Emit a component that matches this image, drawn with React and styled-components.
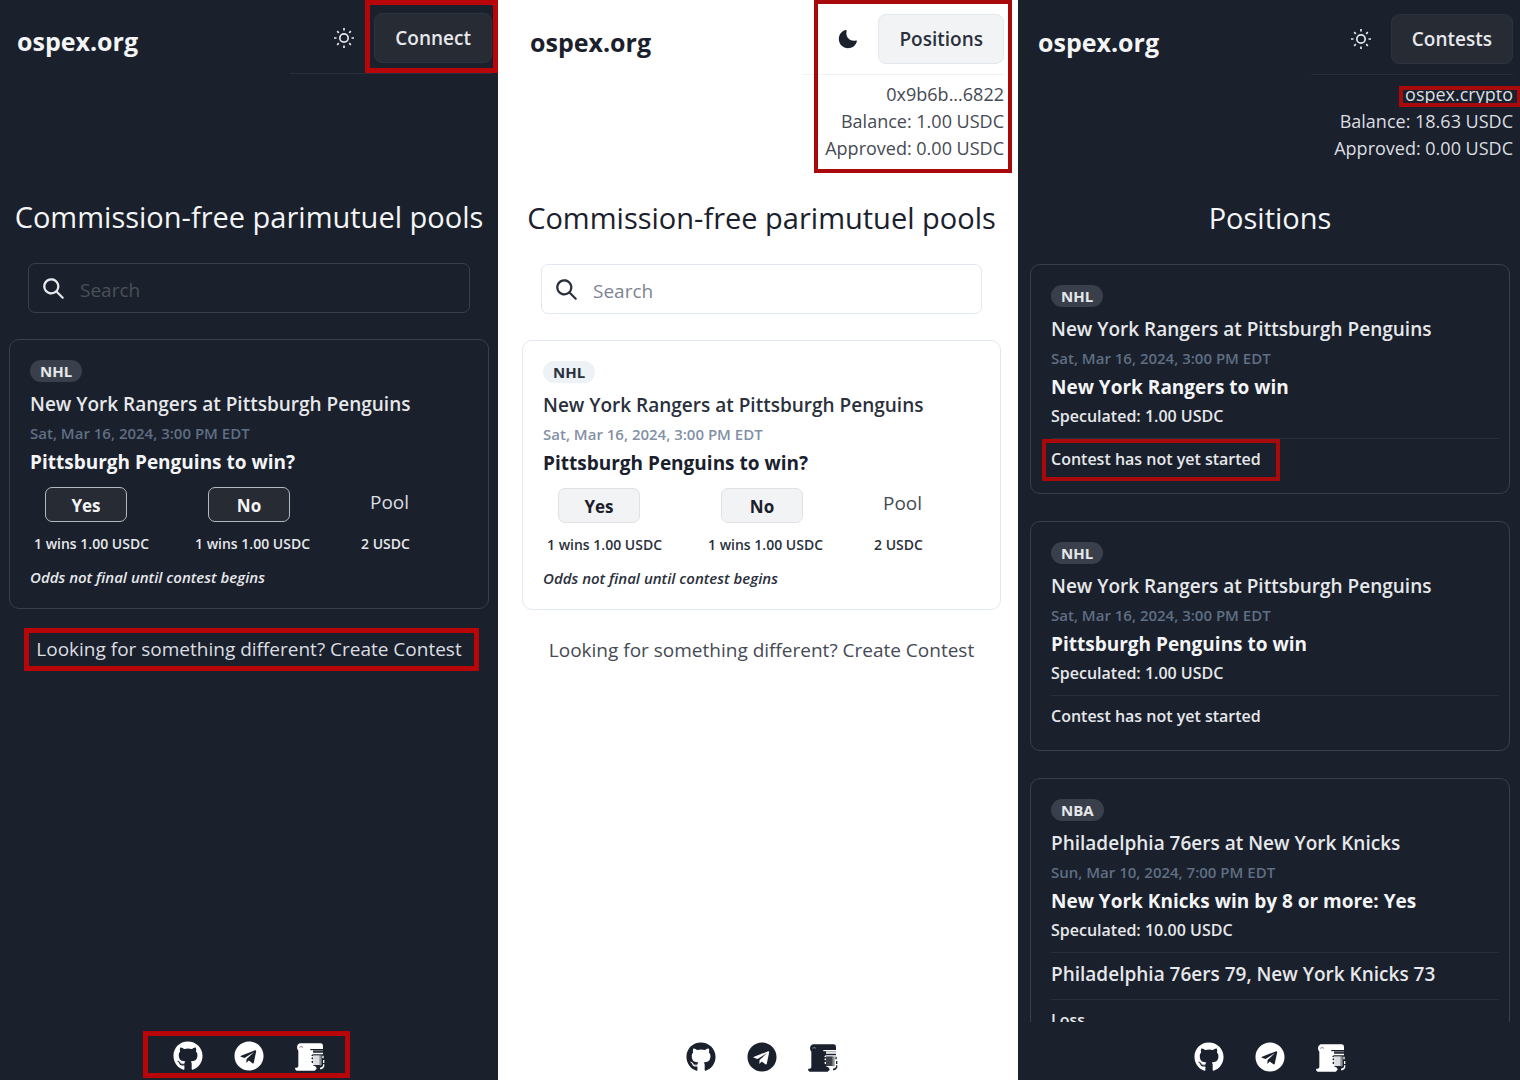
import React from "react";
import styled, { createGlobalStyle, ThemeProvider } from "styled-components";
import { FaGithub, FaTelegram } from "react-icons/fa";

const dark = {
  bg: "#1a202c",
  text: "#e6e8eb",
  strong: "#f4f5f6",
  soft: "#dcdee1",
  muted: "#5f6f84",
  placeholder: "#4b5058",
  line: "#292f3a",
  border: "#3a404b",
  badge: "#3a404b",
  button: "#272b33",
  buttonBorder: "#2b3240",
  betBorder: "#b4b7bc",
  icon: "#ffffff",
};

const light = {
  bg: "#ffffff",
  text: "#2a303c",
  strong: "#1a202c",
  soft: "#454a54",
  muted: "#8390a6",
  placeholder: "#7c8494",
  line: "#eff1f5",
  border: "#e2e8f0",
  badge: "#edf2f7",
  button: "#f2f3f5",
  buttonBorder: "#e2e8f0",
  betBorder: "#dfe1e4",
  icon: "#1a202c",
};

const GlobalStyle = createGlobalStyle`
  *, *::before, *::after { box-sizing: border-box; }
  body { margin: 0; font-family: "Open Sans", "Noto Sans", sans-serif; }
  h1, h2, h3, p, ul { margin: 0; padding: 0; }
  button, input { font-family: inherit; }
`;

const Board = styled.main`
  display: grid;
  grid-template-columns: 498fr 520fr 502fr;
  height: 100vh;
`;

const Panel = styled.section`
  display: flex;
  flex-direction: column;
  min-width: 0;
  height: 100vh;
  overflow: hidden;
  padding: ${(p) => p.$padding};
  background: ${(p) => p.theme.bg};
  color: ${(p) => p.theme.text};
`;

const Header = styled.header`
  display: flex;
  justify-content: space-between;
  align-items: flex-start;
  flex: none;
  height: 185px;
  margin-right: -3px;
  padding-left: 8px;
`;

const Brand = styled.h1`
  padding-top: 11px;
  font-size: 25px;
  line-height: 34px;
  font-weight: 700;
  color: ${(p) => p.theme.strong};
`;

const Account = styled.div`
  position: relative;
  display: flex;
  flex-direction: column;
  min-width: 202px;
`;

const Actions = styled.div`
  display: flex;
  justify-content: flex-end;
  align-items: center;
  gap: 20px;
  padding-bottom: 10px;
  border-bottom: 1px solid ${(p) => p.theme.line};
`;

const IconButton = styled.button`
  display: flex;
  padding: 0;
  border: 0;
  background: none;
  color: ${(p) => p.theme.text};
`;

const ButtonWrap = styled.div`
  position: relative;
`;

const MainButton = styled.button`
  display: block;
  height: 50px;
  padding: 0 20px;
  border: 1px solid ${(p) => p.theme.buttonBorder};
  border-radius: 8px;
  background: ${(p) => p.theme.button};
  color: ${(p) => p.theme.text};
  font-size: 19px;
  font-weight: 600;
`;

const Balances = styled.div`
  display: flex;
  flex-direction: column;
  align-items: flex-end;
  padding-top: 6px;
  font-size: 18px;
  line-height: 27px;
  color: ${(p) => p.theme.soft};
`;

const BalanceLine = styled.p`
  position: relative;
`;

const Mark = styled.span`
  position: absolute;
  inset: ${(p) => p.$inset};
  border: ${(p) => p.$width || 4}px solid ${(p) => (p.$width === 5 ? "#b80508" : "#a80a0c")};
  pointer-events: none;
`;

const Heading = styled.h2`
  flex: none;
  text-align: center;
  font-size: 29px;
  line-height: 38px;
  font-weight: 400;
  white-space: nowrap;
  color: ${(p) => p.theme.strong};
`;

const SearchBox = styled.label`
  display: flex;
  align-items: center;
  flex: none;
  gap: 16px;
  height: 50px;
  margin: 27px 19px 26px;
  padding: 0 14px;
  border: 1px solid ${(p) => p.theme.border};
  border-radius: 7px;
`;

const SearchInput = styled.input`
  flex: 1;
  min-width: 0;
  padding: 3px 0 0;
  border: 0;
  outline: 0;
  background: none;
  color: ${(p) => p.theme.text};
  font-size: 19px;
  &::placeholder { color: ${(p) => p.theme.placeholder}; opacity: 1; }
`;

const Card = styled.article`
  display: flex;
  flex-direction: column;
  align-items: flex-start;
  flex: none;
  padding: 20px 10px 20px 20px;
  border: 1px solid ${(p) => p.theme.border};
  border-radius: 10px;
`;

const Badge = styled.span`
  margin-bottom: 8px;
  padding: 0 10px;
  border-radius: 11px;
  background: ${(p) => p.theme.badge};
  font-size: 15px;
  line-height: 22px;
  font-weight: 700;
`;

const Matchup = styled.h3`
  font-size: 19px;
  line-height: 29px;
  font-weight: 600;
`;

const DateLine = styled.p`
  font-size: 15px;
  line-height: 29px;
  font-weight: 600;
  color: ${(p) => p.theme.muted};
`;

const Proposition = styled.p`
  font-size: 19px;
  line-height: 29px;
  font-weight: 700;
  color: ${(p) => p.theme.strong};
`;

const BetRow = styled.div`
  display: grid;
  grid-template-columns: 163px 162px auto;
  align-items: center;
  margin-top: 10px;
  padding-left: 15px;
`;

const BetButton = styled.button`
  width: 82px;
  height: 35px;
  padding: 2px 0 0;
  border: 1px solid ${(p) => p.theme.betBorder};
  border-radius: 7px;
  background: ${(p) => p.theme.button};
  color: ${(p) => p.theme.strong};
  font-size: 17px;
  font-weight: 700;
`;

const PoolLabel = styled.span`
  padding-bottom: 4px;
  font-size: 19px;
  line-height: 27px;
  color: ${(p) => p.theme.soft};
`;

const OddsRow = styled.div`
  display: grid;
  grid-template-columns: 161px 166px auto;
  margin: 11px 0;
  padding-left: 4px;
  font-size: 14px;
  line-height: 22px;
  font-weight: 600;
`;

const Note = styled.p`
  font-size: 15px;
  line-height: 22px;
  font-weight: 600;
  font-style: italic;
`;

const Stake = styled.p`
  margin-bottom: 7px;
  font-size: 16px;
  line-height: 29px;
  font-weight: 600;
`;

const Result = styled.div`
  align-self: stretch;
  padding-top: 6px;
  border-top: 1px solid ${(p) => p.theme.line};
  font-size: 16px;
  line-height: 28px;
  font-weight: 600;
`;

const Score = styled(Result)`
  padding: 7px 0 10px;
  font-size: 19px;
  line-height: 29px;
`;

const Marked = styled.span`
  position: relative;
  display: inline-block;
`;

const CreateLine = styled.p`
  position: relative;
  align-self: center;
  margin-top: 26px;
  font-size: 19px;
  line-height: 29px;
  white-space: nowrap;
  color: ${(p) => p.theme.soft};
`;

const CreateLink = styled.a`
  color: inherit;
  text-decoration: none;
`;

const PositionList = styled.div`
  display: flex;
  flex-direction: column;
  flex: 1;
  gap: 27px;
  min-height: 0;
  margin-top: 27px;
  overflow: hidden;
`;

const Footer = styled.footer`
  display: flex;
  justify-content: center;
  flex: none;
  margin-top: auto;
  padding: 20px 0 ${(p) => p.$bottom}px;
`;

const Social = styled.nav`
  position: relative;
  display: flex;
  gap: 31px;
`;

const SocialLink = styled.a`
  display: flex;
  color: ${(p) => p.theme.icon};
`;

const SunIcon = () => (
  <svg width="20" height="20" viewBox="0 0 24 24" fill="none" stroke="currentColor" strokeWidth="2" aria-hidden="true">
    <circle cx="12" cy="12" r="5" />
    <path d="M12 0v3M12 21v3M3.8 3.8l2 2M18.2 18.2l2 2M0 12h3M21 12h3M3.8 20.2l2-2M18.2 5.8l2-2" />
  </svg>
);

const MoonIcon = () => (
  <svg width="20" height="20" viewBox="0 0 24 24" fill="#1a202c" aria-hidden="true">
    <path d="M21.4,13.7C20.6,13.9,19.8,14,19,14c-5,0-9-4-9-9c0-0.8,0.1-1.6,0.3-2.4c0.1-0.3,0-0.7-0.3-1c-0.3-0.3-0.6-0.4-1-0.3C4.3,2.7,1,7.1,1,12c0,6.1,4.9,11,11,11c4.9,0,9.3-3.3,10.6-8.1c0.1-0.3,0-0.7-0.3-1C22.1,13.7,21.7,13.6,21.4,13.7z" />
  </svg>
);

const SearchIcon = () => (
  <svg width="21" height="21" viewBox="0 0 24 24" fill="currentColor" aria-hidden="true">
    <path d="M23.384,21.619,16.855,15.09a9.284,9.284,0,1,0-1.768,1.768l6.529,6.529a1.266,1.266,0,0,0,1.768,0A1.251,1.251,0,0,0,23.384,21.619ZM2.75,9.5a6.75,6.75,0,1,1,6.75,6.75A6.758,6.758,0,0,1,2.75,9.5Z" />
  </svg>
);

const ScrollIcon = () => (
  <svg width="30" height="30" viewBox="0 0 90 90" fill="currentColor" aria-hidden="true">
    <path d="M14 7h64q6 1 6 8v9H46v4h8v7h30v5H54l-6 3 8 4-8 5 8 5-8 6 8 5-2 5 9 4 2 6-6 6H5q-5-2-5-9h6q4-1 4-6V29Q6 26 6 18q0-8 8-11z" />
    <path d="M50 27h34v4H50z" opacity=".35" />
    <path d="M54 43h20v29H54z" opacity=".85" />
    <path d="M74 43h6v30h-6z" opacity=".5" />
    <path d="M82 44h4v8h-4zM84 57h4v9h-4zM84 70h4v6q-2 7-9 9h-4v-5q7-1 9-5z" />
    <path d="M13 19q5-5 11 0" fill="none" stroke="#7d8289" strokeWidth="3" />
  </svg>
);

function PanelHeader({ isDark, action, lines, markButton, markAccount, markFirst }) {
  return (
    <Header>
      <Brand>ospex.org</Brand>
      <Account>
        <Actions>
          <IconButton aria-label="Toggle color mode">{isDark ? <SunIcon /> : <MoonIcon />}</IconButton>
          <ButtonWrap>
            <MainButton>{action}</MainButton>
            {markButton && <Mark $width={5} $inset="-13px -6px -10px -9px" />}
          </ButtonWrap>
        </Actions>
        {lines && (
          <Balances>
            {lines.map((line, i) => (
              <BalanceLine key={line}>
                {line}
                {markFirst && i === 0 && <Mark $inset="5px -8px 1px -6px" />}
              </BalanceLine>
            ))}
          </Balances>
        )}
        {markAccount && <Mark $inset="-14px -8px -11px 12px" />}
      </Account>
    </Header>
  );
}

function ContestPanel({ marked }) {
  return (
    <>
      <Heading>Commission-free parimutuel pools</Heading>
      <SearchBox>
        <SearchIcon />
        <SearchInput type="text" placeholder="Search" aria-label="Search" />
      </SearchBox>
      <Card>
        <Badge>NHL</Badge>
        <Matchup>New York Rangers at Pittsburgh Penguins</Matchup>
        <DateLine>Sat, Mar 16, 2024, 3:00 PM EDT</DateLine>
        <Proposition>Pittsburgh Penguins to win?</Proposition>
        <BetRow>
          <BetButton>Yes</BetButton>
          <BetButton>No</BetButton>
          <PoolLabel>Pool</PoolLabel>
        </BetRow>
        <OddsRow>
          <span>1 wins 1.00 USDC</span>
          <span>1 wins 1.00 USDC</span>
          <span>2 USDC</span>
        </OddsRow>
        <Note>Odds not final until contest begins</Note>
      </Card>
      <CreateLine>
        Looking for something different? <CreateLink href="#create">Create Contest</CreateLink>
        {marked && <Mark $width={5} $inset="-7px -17px -7px -12px" />}
      </CreateLine>
    </>
  );
}

function PanelFooter({ marked, bottom }) {
  return (
    <Footer $bottom={bottom}>
      <Social aria-label="Links">
        <SocialLink href="#github" aria-label="GitHub"><FaGithub size={30} /></SocialLink>
        <SocialLink href="#telegram" aria-label="Telegram"><FaTelegram size={30} /></SocialLink>
        <SocialLink href="#docs" aria-label="Documentation"><ScrollIcon /></SocialLink>
        {marked && <Mark $width={5} $inset="-10px -25px -7px -30px" />}
      </Social>
    </Footer>
  );
}

const positions = [
  { league: "NHL", matchup: "New York Rangers at Pittsburgh Penguins", date: "Sat, Mar 16, 2024, 3:00 PM EDT", pick: "New York Rangers to win", stake: "1.00", result: "Contest has not yet started", marked: true },
  { league: "NHL", matchup: "New York Rangers at Pittsburgh Penguins", date: "Sat, Mar 16, 2024, 3:00 PM EDT", pick: "Pittsburgh Penguins to win", stake: "1.00", result: "Contest has not yet started" },
  { league: "NBA", matchup: "Philadelphia 76ers at New York Knicks", date: "Sun, Mar 10, 2024, 7:00 PM EDT", pick: "New York Knicks win by 8 or more: Yes", stake: "10.00", score: "Philadelphia 76ers 79, New York Knicks 73", result: "Loss" },
];

export default function App() {
  return (
    <>
      <GlobalStyle />
      <Board>
        <ThemeProvider theme={dark}>
          <Panel $padding="13px 9px 0">
            <PanelHeader isDark action="Connect" markButton />
            <ContestPanel marked />
            <PanelFooter marked bottom={9} />
          </Panel>
        </ThemeProvider>
        <ThemeProvider theme={light}>
          <Panel $padding="14px 17px 0 24px">
            <PanelHeader action="Positions" markAccount lines={["0x9b6b...6822", "Balance: 1.00 USDC", "Approved: 0.00 USDC"]} />
            <ContestPanel />
            <PanelFooter bottom={8} />
          </Panel>
        </ThemeProvider>
        <ThemeProvider theme={dark}>
          <Panel $padding="14px 10px 0 12px">
            <PanelHeader isDark action="Contests" markFirst lines={["ospex.crypto", "Balance: 18.63 USDC", "Approved: 0.00 USDC"]} />
            <Heading>Positions</Heading>
            <PositionList>
              {positions.map((p) => (
                <Card key={p.pick}>
                  <Badge>{p.league}</Badge>
                  <Matchup>{p.matchup}</Matchup>
                  <DateLine>{p.date}</DateLine>
                  <Proposition>{p.pick}</Proposition>
                  <Stake>Speculated: {p.stake} USDC</Stake>
                  {p.score && <Score>{p.score}</Score>}
                  <Result>
                    <Marked>
                      {p.result}
                      {p.marked && <Mark $inset="-6px -19px -8px -9px" />}
                    </Marked>
                  </Result>
                </Card>
              ))}
            </PositionList>
            <PanelFooter bottom={8} />
          </Panel>
        </ThemeProvider>
      </Board>
    </>
  );
}
